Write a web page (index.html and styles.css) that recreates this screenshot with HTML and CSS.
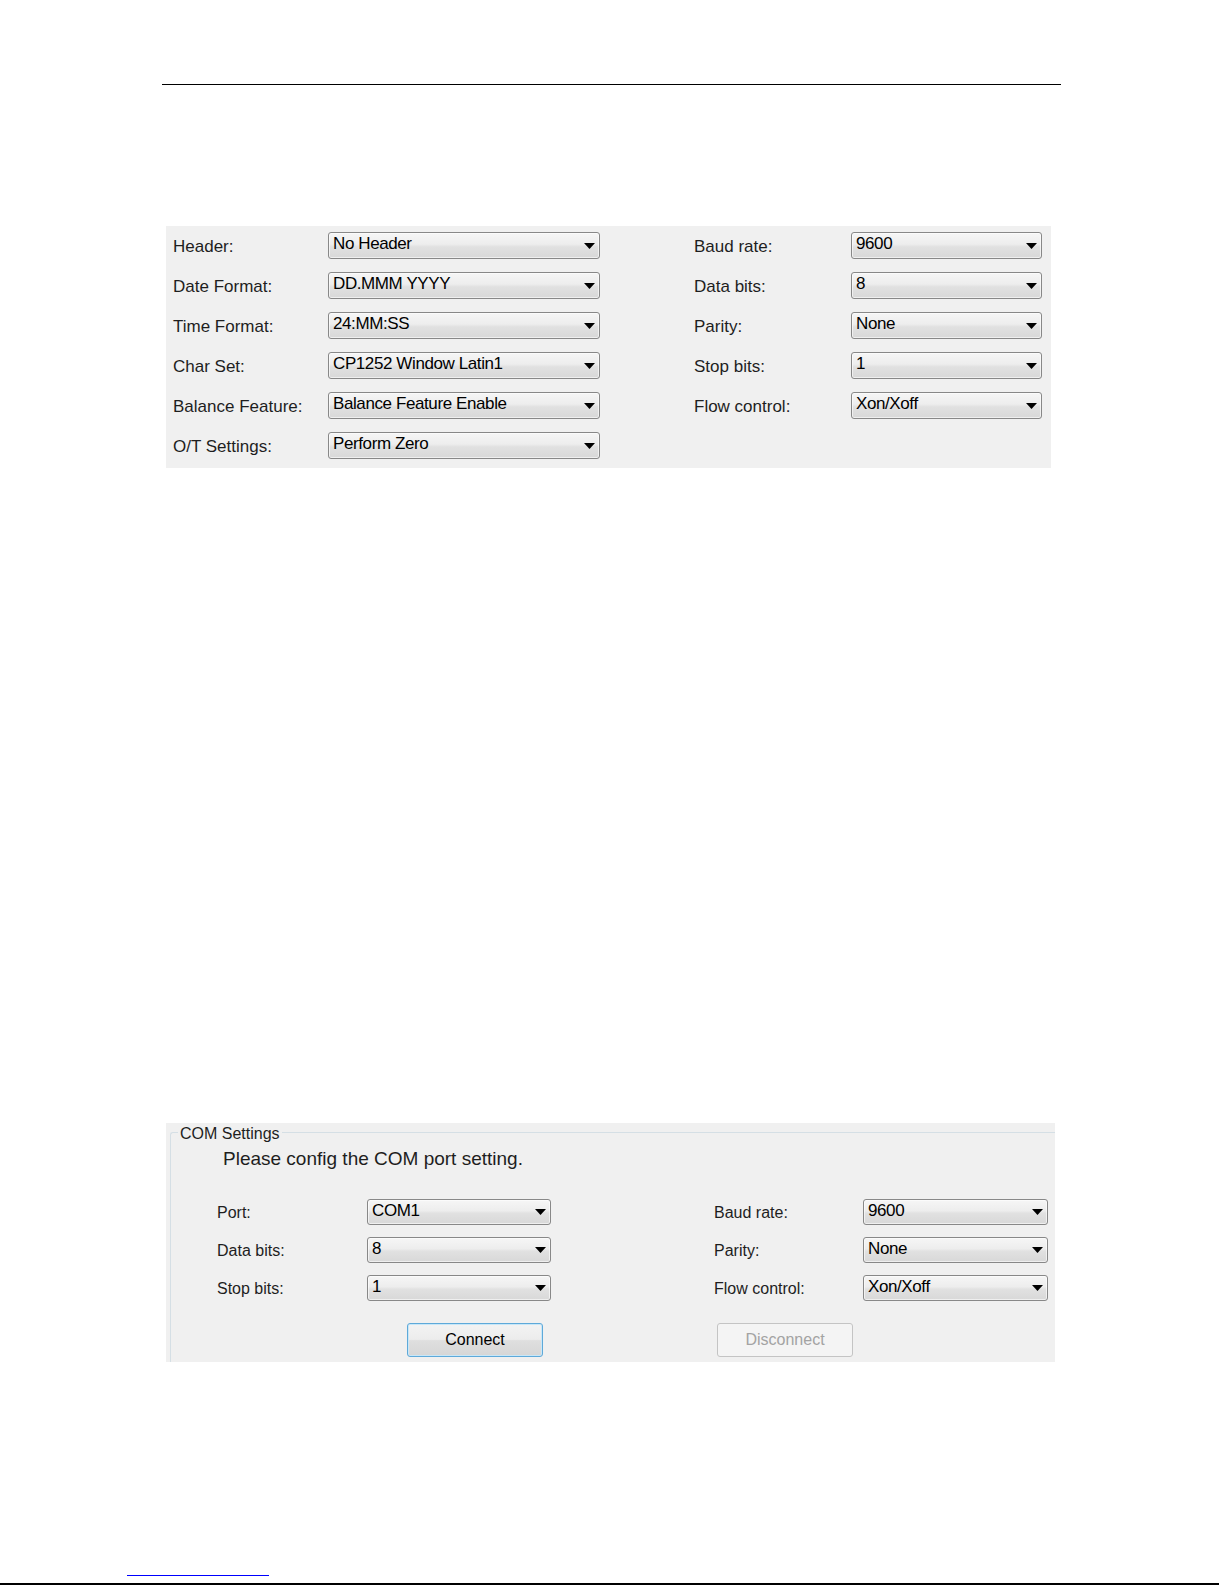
FILE: index.html
```html
<!DOCTYPE html>
<html lang="en">
<head>
    <meta charset="UTF-8">
    <meta name="viewport" content="width=device-width, initial-scale=1.0">
    <title>Printer and COM settings</title>
    <link rel="stylesheet" href="styles.css">
</head>
<body>

    <div class="page-rule"></div>

    <!-- print settings -->
    <div class="settings">
        <div class="field-list left">
            <label>Header:</label>
            <div class="combo"><span>No Header</span><svg width="11" height="6" viewBox="0 0 11 6"><path d="M0 0h11L5.5 6z"/></svg></div>
            <label>Date Format:</label>
            <div class="combo"><span>DD.MMM YYYY</span><svg width="11" height="6" viewBox="0 0 11 6"><path d="M0 0h11L5.5 6z"/></svg></div>
            <label>Time Format:</label>
            <div class="combo"><span>24:MM:SS</span><svg width="11" height="6" viewBox="0 0 11 6"><path d="M0 0h11L5.5 6z"/></svg></div>
            <label>Char Set:</label>
            <div class="combo"><span>CP1252 Window Latin1</span><svg width="11" height="6" viewBox="0 0 11 6"><path d="M0 0h11L5.5 6z"/></svg></div>
            <label>Balance Feature:</label>
            <div class="combo"><span>Balance Feature Enable</span><svg width="11" height="6" viewBox="0 0 11 6"><path d="M0 0h11L5.5 6z"/></svg></div>
            <label>O/T Settings:</label>
            <div class="combo"><span>Perform Zero</span><svg width="11" height="6" viewBox="0 0 11 6"><path d="M0 0h11L5.5 6z"/></svg></div>
        </div>
        <div class="field-list right">
            <label>Baud rate:</label>
            <div class="combo"><span>9600</span><svg width="11" height="6" viewBox="0 0 11 6"><path d="M0 0h11L5.5 6z"/></svg></div>
            <label>Data bits:</label>
            <div class="combo"><span>8</span><svg width="11" height="6" viewBox="0 0 11 6"><path d="M0 0h11L5.5 6z"/></svg></div>
            <label>Parity:</label>
            <div class="combo"><span>None</span><svg width="11" height="6" viewBox="0 0 11 6"><path d="M0 0h11L5.5 6z"/></svg></div>
            <label>Stop bits:</label>
            <div class="combo"><span>1</span><svg width="11" height="6" viewBox="0 0 11 6"><path d="M0 0h11L5.5 6z"/></svg></div>
            <label>Flow control:</label>
            <div class="combo"><span>Xon/Xoff</span><svg width="11" height="6" viewBox="0 0 11 6"><path d="M0 0h11L5.5 6z"/></svg></div>
        </div>
    </div>

    <!-- COM port dialog -->
    <div class="com-panel">
        <fieldset class="com-group">
            <legend>COM Settings</legend>
            <div class="com-body">
                <p class="com-title">Please config the COM port setting.</p>
                <div class="com-fields">
                    <div class="field-list com">
                        <label>Port:</label>
                        <div class="combo small"><span>COM1</span><svg width="11" height="6" viewBox="0 0 11 6"><path d="M0 0h11L5.5 6z"/></svg></div>
                        <label>Data bits:</label>
                        <div class="combo small"><span>8</span><svg width="11" height="6" viewBox="0 0 11 6"><path d="M0 0h11L5.5 6z"/></svg></div>
                        <label>Stop bits:</label>
                        <div class="combo small"><span>1</span><svg width="11" height="6" viewBox="0 0 11 6"><path d="M0 0h11L5.5 6z"/></svg></div>
                    </div>
                    <div class="field-list com com-right">
                        <label>Baud rate:</label>
                        <div class="combo small"><span>9600</span><svg width="11" height="6" viewBox="0 0 11 6"><path d="M0 0h11L5.5 6z"/></svg></div>
                        <label>Parity:</label>
                        <div class="combo small"><span>None</span><svg width="11" height="6" viewBox="0 0 11 6"><path d="M0 0h11L5.5 6z"/></svg></div>
                        <label>Flow control:</label>
                        <div class="combo small"><span>Xon/Xoff</span><svg width="11" height="6" viewBox="0 0 11 6"><path d="M0 0h11L5.5 6z"/></svg></div>
                    </div>
                </div>
                <div class="com-buttons">
                    <button type="button" class="btn btn-default">Connect</button>
                    <button type="button" class="btn" disabled>Disconnect</button>
                </div>
            </div>
        </fieldset>
    </div>

    <div class="footer-link"></div>
    <div class="page-bottom"></div>

</body>
</html>
```

FILE: styles.css
```css
html, body {
    margin: 0;
    padding: 0;
}

body {
    font-family: "Liberation Sans", Arial, sans-serif;
    background: #fff;
    color: #1e1e1e;
    width: 1225px;
    height: 1585px;
    overflow: hidden;
}

.page-rule {
    margin: 84px 0 0 162px;
    width: 899px;
    border-top: 1px solid #000;
}

/* top settings block */
.settings {
    display: flex;
    gap: 94px;
    margin: 141px 0 0 166px;
    width: 885px;
    height: 242px;
    box-sizing: border-box;
    padding: 6px 9px 9px 7px;
    background: #f0f0f0;
}

.field-list {
    display: grid;
    grid-auto-rows: 27px;
    row-gap: 13px;
    align-items: center;
}

.field-list.left {
    grid-template-columns: 155px 272px;
}

.field-list.right {
    grid-template-columns: 157px 191px;
}

.field-list label {
    padding-top: 2px;
    font-size: 17px;
    color: #1e1e1e;
}

.combo {
    display: flex;
    justify-content: space-between;
    align-items: center;
    height: 27px;
    box-sizing: border-box;
    padding: 0 4px 0 4px;
    border: 1px solid #888;
    border-radius: 3px;
    background: linear-gradient(#f6f6f6, #ededed 45%, #e1e1e1 55%, #d8d8d8);
    box-shadow: inset 0 0 0 1px rgba(255, 255, 255, 0.6);
    font-size: 17px;
    letter-spacing: -0.4px;
    color: #000;
}

.combo span {
    align-self: flex-start;
    line-height: 22px;
}

.combo svg {
    fill: #000;
    flex: none;
}

/* COM settings dialog */
.com-panel {
    margin: 655px 0 0 166px;
    width: 889px;
    height: 239px;
    box-sizing: border-box;
    padding-left: 4px;
    background: #f0f0f0;
    overflow: hidden;
}

.com-group {
    margin: 0;
    padding: 7px 0 0 7px;
    min-width: 0;
    height: 100%;
    box-sizing: border-box;
    border: 1px solid #d5dfe5;
    border-right: none;
    border-bottom: none;
    border-radius: 3px 0 0 0;
}

.com-group legend {
    padding: 4px 2px 0;
    font-size: 16px;
    line-height: 14px;
    color: #1e1e1e;
}

.com-body {
    padding-left: 39px;
}

.com-title {
    margin: 0 0 29px 6px;
    font-size: 19px;
    line-height: 22px;
    color: #1e1e1e;
}

.com-fields {
    display: flex;
    gap: 163px;
}

.field-list.com {
    grid-template-columns: 150px 184px;
    grid-auto-rows: 26px;
    row-gap: 12px;
}

.field-list.com-right {
    grid-template-columns: 149px 185px;
}

.field-list.com label {
    font-size: 16px;
}

.combo.small {
    height: 26px;
}

.com-buttons {
    display: flex;
    gap: 174px;
    margin: 22px 0 0 190px;
}

.btn {
    width: 136px;
    height: 34px;
    padding: 0;
    font-family: "Liberation Sans", Arial, sans-serif;
    font-size: 16px;
    color: #a3a3a3;
    background: #f4f4f4;
    border: 1px solid #c4c4c4;
    border-radius: 3px;
}

.btn-default {
    color: #000;
    border-color: #5ea9d9;
    background: linear-gradient(#f3f3f3, #ececec 48%, #dfdfdf 52%, #d6d6d6);
    box-shadow: inset 0 0 0 1px #c8e7f8;
}

.footer-link {
    margin: 213px 0 0 127px;
    width: 142px;
    border-top: 1px solid #0000ff;
}

.page-bottom {
    margin-top: 7px;
    width: 1219px;
    height: 0;
    border-bottom: 2px solid #000;
}
```
